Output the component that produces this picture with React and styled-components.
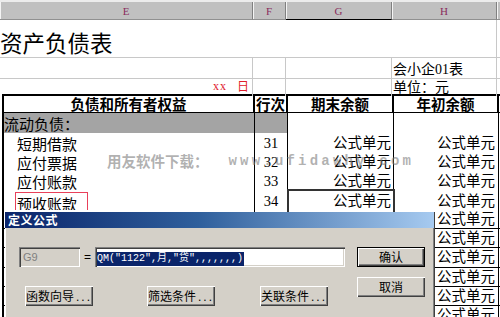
import React from 'react';
import styled, { createGlobalStyle } from 'styled-components';

const Global = createGlobalStyle`
  html, body { margin: 0; padding: 0; background: #fff; }
  body { width: 500px; height: 317px; overflow: hidden; }
`;

const CJK = '"Noto Sans CJK SC", sans-serif';
const MIX = '"Liberation Serif", "Noto Sans CJK SC", serif';
const COLS = '253px 33px 106px 105px 40px';
const TCOLS = '251px 33px 106px 105px 40px';

const Page = styled.div`
  position: relative;
  width: 500px;
  height: 317px;
  overflow: hidden;
  background: #fff;
`;

const ColHeaderBar = styled.div`
  display: grid;
  grid-template-columns: ${COLS};
  height: 20px;
  box-sizing: border-box;
  border-top: 2px solid #ececec;
  background: #c0c0c0;
`;

const ColHeader = styled.div`
  display: flex;
  align-items: center;
  justify-content: center;
  box-sizing: border-box;
  border-right: 1px solid #808080;
  box-shadow: inset 1px 0 0 #f4f4f4;
  border-bottom: 1px solid ${p => (p.$active ? '#000' : '#909090')};
  font: 11px "Liberation Serif", serif;
  color: #8a2c5c;
`;

const TitleRow = styled.div`
  display: grid;
  grid-template-columns: 497px 40px;
  height: 37px;
`;

const TitleCell = styled.div`
  box-sizing: border-box;
  border-right: 1px solid #c8c8c8;
  padding-top: 7px;
  font: 22.5px/30px ${CJK};
  color: #000;
  white-space: nowrap;
`;

const InfoRow = styled.div`
  display: grid;
  grid-template-columns: ${COLS};
  height: ${p => p.$h}px;
  box-sizing: border-box;
  border-top: ${p => (p.$first ? '1px solid #c8c8c8' : 'none')};
`;

const InfoCell = styled.div`
  box-sizing: border-box;
  border-right: 1px solid #c8c8c8;
  border-bottom: ${p => (p.$line ? '1px solid #c8c8c8' : 'none')};
  display: flex;
  align-items: center;
  justify-content: ${p => (p.$right ? 'flex-end' : 'flex-start')};
  padding: ${p => (p.$right ? '0 3px 0 0' : '0 0 0 1px')};
  font: 14px ${MIX};
  white-space: nowrap;
  color: #000;
`;

const Red = styled.span`
  color: #e0202c;
  font: 12px ${MIX};
  letter-spacing: ${p => (p.$spaced ? '1px' : '0')};
  margin-right: ${p => (p.$spaced ? '10px' : '0')};
`;

const Table = styled.div`
  margin-left: 2px;
  border-left: 2px solid #000;
`;

const HeadRow = styled.div`
  display: grid;
  grid-template-columns: ${TCOLS};
  height: 19.3px;
  box-sizing: border-box;
  border-top: 2px solid #000;
`;

const HeadCell = styled.div`
  box-sizing: border-box;
  border-right: ${p => (p.$last ? 'none' : '2px solid #000')};
  border-bottom: 1px solid #000;
  display: flex;
  align-items: center;
  justify-content: center;
  font: 700 14.5px ${CJK};
  white-space: nowrap;
  overflow: visible;
  line-height: 1;
  color: #000;
`;

const BodyRow = styled.div`
  display: grid;
  grid-template-columns: ${TCOLS};
  height: 19.3px;
  box-sizing: border-box;
`;

const Cell = styled.div`
  box-sizing: border-box;
  position: relative;
  border-right: ${p => (p.$last ? 'none' : '1px solid #000')};
  border-bottom: 1px solid #000;
  background: ${p => (p.$shade ? '#a4a4a4' : '#fff')};
  display: flex;
  align-items: center;
  justify-content: ${p => p.$align || 'flex-start'};
  padding: 0 ${p => p.$pr || 0}px 0 ${p => p.$pl || 0}px;
  font: 14.5px ${MIX};
  color: #000;
  white-space: nowrap;
  line-height: 1;
  outline: ${p => (p.$selected ? '2px solid #333' : 'none')};
  outline-offset: -1px;
  z-index: ${p => (p.$selected ? 1 : 0)};
`;

const Label = styled.span`
  display: inline-block;
  box-sizing: border-box;
  height: ${p => (p.$marked ? '20px' : 'auto')};
  line-height: 18px;
  padding: ${p => (p.$marked ? '0 10px 0 1px' : '0')};
  margin-left: ${p => (p.$marked ? '-2px' : '0')};
  margin-top: ${p => (p.$marked ? '2px' : '0')};
  border: ${p => (p.$marked ? '1px solid #e8405a' : 'none')};
  font: 15px ${CJK};
`;

const Watermark = styled.div`
  position: absolute;
  left: 107px;
  top: 150px;
  display: flex;
  align-items: center;
  gap: 20px;
  color: rgba(125, 125, 125, 0.6);
  font: 700 14.5px ${CJK};
  white-space: nowrap;
  pointer-events: none;
  z-index: 2;
`;

const WaterLatin = styled.span`
  font: 700 14px "Liberation Mono", monospace;
  letter-spacing: 3.2px;
`;

/* ---------- dialog ---------- */

const Dialog = styled.div`
  position: absolute;
  left: 5px;
  top: 212px;
  width: 430px;
  height: 105px;
  box-sizing: border-box;
  background: #d4d0c8;
  border-right: 1px solid #404040;
  box-shadow: inset -1px 0 0 #808080, inset 1px 0 0 #fff;
  z-index: 3;
  display: flex;
  flex-direction: column;
`;

const TitleBar = styled.div`
  height: 16px;
  background: linear-gradient(to right, #0a246a 0%, #2f5f9c 45%, #a6caf0 100%);
  color: #fff;
  font: 700 12px/16px ${CJK};
  letter-spacing: 0.5px;
  padding-left: 3px;
`;

const DialogBody = styled.div`
  display: flex;
  padding: 19px 0 0 14px;
`;

const LeftCol = styled.div`
  display: flex;
  flex-direction: column;
  width: 326px;
`;

const FieldRow = styled.div`
  display: flex;
  align-items: center;
  height: 20px;
`;

const Field = styled.div`
  box-sizing: border-box;
  width: ${p => p.$w}px;
  height: 20px;
  background: ${p => (p.$disabled ? '#d4d0c8' : '#fff')};
  box-shadow: inset 1px 1px 0 #808080, inset 2px 2px 0 #404040,
    inset -1px -1px 0 #fff, inset -2px -2px 0 #d4d0c8;
  padding: 3px 0 0 ${p => (p.$disabled ? 4 : 2)}px;
  font: 11px/14px "Liberation Sans", sans-serif;
  color: #808080;
  white-space: nowrap;
  overflow: hidden;
`;

const Eq = styled.div`
  width: 15px;
  text-align: center;
  font: 12px "Liberation Sans", sans-serif;
  color: #000;
`;

const Selected = styled.span`
  display: inline-block;
  background: #0a246a;
  color: #fff;
  font: 10px/14px "Liberation Mono", "Noto Sans CJK SC", monospace;
  padding-right: 1px;
`;

const BottomButtons = styled.div`
  display: grid;
  grid-template-columns: 122px 113px 68px;
  margin-top: 19px;
  padding-left: 6px;
`;

const RightCol = styled.div`
  display: flex;
  flex-direction: column;
  gap: 10px;
  margin-left: 12px;
`;

const Button = styled.button`
  width: 68px;
  height: 20px;
  padding: 0;
  margin: 0;
  border: none;
  background: #d4d0c8;
  box-shadow: ${p =>
    p.$default
      ? 'inset 0 0 0 1px #000, inset 2px 2px 0 #fff, inset -2px -2px 0 #404040, inset -3px -3px 0 #808080'
      : 'inset 1px 1px 0 #fff, inset -1px -1px 0 #404040, inset -2px -2px 0 #808080'};
  font: 12px/20px ${CJK};
  color: #000;
  white-space: nowrap;
`;

const Dots = styled.span`
  font: 12px "Liberation Sans", sans-serif;
  letter-spacing: 2px;
  margin-left: 2px;
`;

const rows = [
  { id: 'h', label: '流动负债：', shade: true },
  { id: 31, label: '短期借款', num: '31' },
  { id: 32, label: '应付票据', num: '32' },
  { id: 33, label: '应付账款', num: '33' },
  { id: 34, label: '预收账款', num: '34', marked: true, selected: true },
  { id: 35, hidden: true },
  { id: 36, hidden: true },
  { id: 37, hidden: true },
  { id: 38, hidden: true },
  { id: 39, hidden: true },
  { id: 40, hidden: true },
];

export default function App() {
  return (
    <Page>
      <Global />
      <ColHeaderBar>
        <ColHeader>E</ColHeader>
        <ColHeader>F</ColHeader>
        <ColHeader $active>G</ColHeader>
        <ColHeader>H</ColHeader>
        <ColHeader />
      </ColHeaderBar>
      <TitleRow>
        <TitleCell>资产负债表</TitleCell>
        <div />
      </TitleRow>
      <InfoRow $h={19} $first>
        <InfoCell $line />
        <InfoCell $line />
        <InfoCell $line />
        <InfoCell $line>会小企01表</InfoCell>
        <InfoCell $line />
      </InfoRow>
      <InfoRow $h={18}>
        <InfoCell $right>
          <Red $spaced>xx</Red>
          <Red>日</Red>
        </InfoCell>
        <InfoCell />
        <InfoCell />
        <InfoCell>单位：元</InfoCell>
        <InfoCell />
      </InfoRow>
      <Table>
        <HeadRow>
          <HeadCell>负债和所有者权益</HeadCell>
          <HeadCell>行次</HeadCell>
          <HeadCell>期末余额</HeadCell>
          <HeadCell>年初余额</HeadCell>
          <HeadCell $last />
        </HeadRow>
        {rows.map(r => (
          <BodyRow key={r.id}>
            <Cell $shade={r.shade} $pl={r.shade ? 0 : 13}>
              {r.label && <Label $marked={r.marked}>{r.label}</Label>}
            </Cell>
            <Cell $shade={r.shade} $align="center">{r.num}</Cell>
            <Cell $align="flex-end" $pr={2} $selected={r.selected}>
              {r.num ? '公式单元' : ''}
            </Cell>
            <Cell $align="flex-end" $pr={3}>{r.num || r.hidden ? '公式单元' : ''}</Cell>
            <Cell $last />
          </BodyRow>
        ))}
      </Table>
      <Watermark>
        <span>用友软件下载：</span>
        <WaterLatin>www.ufidawhy.com</WaterLatin>
      </Watermark>
      <Dialog>
        <TitleBar>定义公式</TitleBar>
        <DialogBody>
          <LeftCol>
            <FieldRow>
              <Field $w={61} $disabled>G9</Field>
              <Eq>=</Eq>
              <Field $w={250}>
                <Selected>QM("1122",月,"贷",,,,,,,)</Selected>
              </Field>
            </FieldRow>
            <BottomButtons>
              <Button>函数向导<Dots>...</Dots></Button>
              <Button>筛选条件<Dots>...</Dots></Button>
              <Button>关联条件<Dots>...</Dots></Button>
            </BottomButtons>
          </LeftCol>
          <RightCol>
            <Button $default>确认</Button>
            <Button>取消</Button>
          </RightCol>
        </DialogBody>
      </Dialog>
    </Page>
  );
}
